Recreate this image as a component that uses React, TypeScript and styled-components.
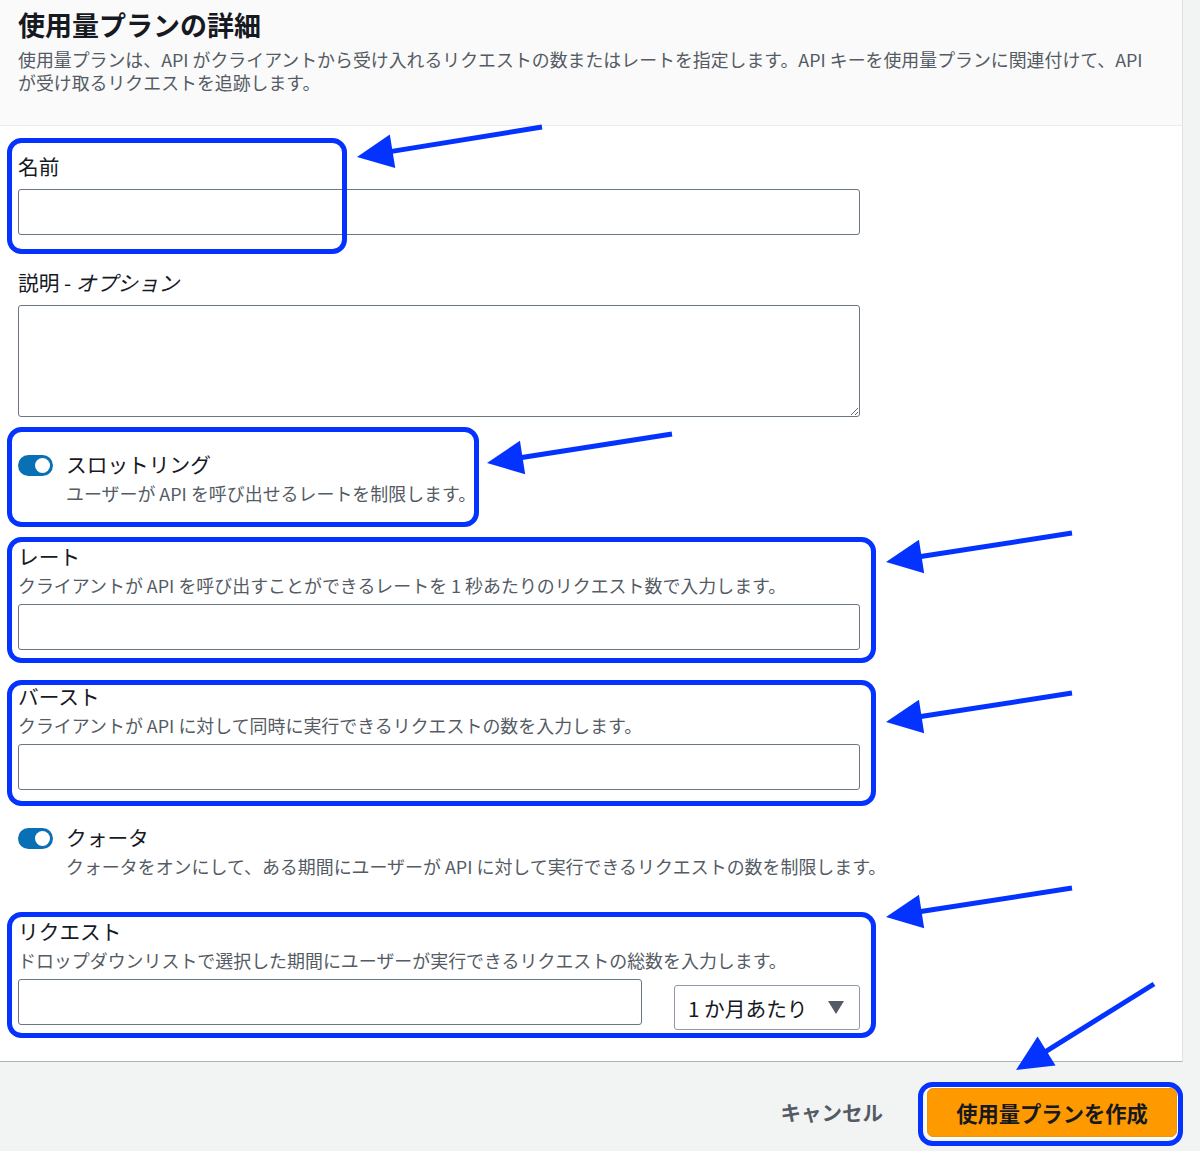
import React from "react";
import styled, { createGlobalStyle } from "styled-components";

const GlobalStyle = createGlobalStyle`
  html, body { margin: 0; padding: 0; background: #f2f3f3; }
  body {
    font-family: "Noto Sans CJK JP", "Noto Sans", sans-serif;
    color: #16191f;
  }
  * { box-sizing: border-box; }
`;

const Page = styled.div`
  position: relative;
  width: 1200px;
  height: 1151px;
  overflow: hidden;
  background: #f2f3f3;
  padding-right: 17px;
`;

const Panel = styled.section`
  background: #ffffff;
  border-right: 1px solid #dfe3e3;
  border-bottom: 1px solid #aab7b8;
`;

const Header = styled.header`
  background: #fafafa;
  border-bottom: 1px solid #eaeded;
  padding: 9px 18px 31px;
`;

const Title = styled.h2`
  margin: 0;
  font-size: 27px;
  line-height: 32px;
  font-weight: 700;
  color: #16191f;
`;

const Lead = styled.p`
  margin: 7px 0 0;
  font-size: 17.9px;
  line-height: 23px;
  color: #545b64;
  white-space: nowrap;
`;

const Body = styled.div`
  padding: 26px 18px 31px;
  display: flex;
  flex-direction: column;
`;

const Field = styled.div<{ $gap?: number }>`
  margin-top: ${(p) => p.$gap ?? 0}px;
  display: flex;
  flex-direction: column;
`;

const Label = styled.label`
  font-size: 20.7px;
  line-height: 28px;
  color: #16191f;
  em {
    font-style: italic;
  }
`;

const Hint = styled.div`
  margin-top: 2px;
  font-size: 17.95px;
  line-height: 26px;
  color: #545b64;
  white-space: nowrap;
`;

const TextInput = styled.input<{ $gap?: number; $width?: number }>`
  display: block;
  width: ${(p) => p.$width ?? 842}px;
  height: 46px;
  margin-top: ${(p) => p.$gap ?? 6}px;
  border: 1px solid #6b7683;
  border-radius: 3px;
  background: #fff;
  font: inherit;
  font-size: 18px;
  padding: 0 12px;
`;

const TextArea = styled.textarea`
  display: block;
  width: 842px;
  height: 112px;
  margin-top: 9px;
  border: 1px solid #6b7683;
  border-radius: 3px;
  background: #fff;
  font: inherit;
  resize: vertical;
`;

const ToggleRow = styled.div<{ $gap?: number }>`
  margin-top: ${(p) => p.$gap ?? 0}px;
  display: flex;
  align-items: flex-start;
  gap: 13px;
`;

const Switch = styled.span`
  position: relative;
  flex: none;
  width: 35px;
  height: 21px;
  margin-top: 5px;
  border-radius: 11px;
  background: #0a70b6;
`;

const Knob = styled.span`
  position: absolute;
  top: 3px;
  right: 3px;
  width: 15px;
  height: 15px;
  border-radius: 50%;
  background: #ffffff;
`;

const ToggleText = styled.div`
  display: flex;
  flex-direction: column;
`;

const InlineRow = styled.div`
  display: flex;
  align-items: flex-start;
  gap: 32px;
`;

const SelectBox = styled.div`
  width: 186px;
  height: 45px;
  margin-top: 12px;
  border: 1px solid #8d99a8;
  border-radius: 3px;
  background: #fff;
  display: flex;
  align-items: center;
  justify-content: space-between;
  padding: 0 15px 0 13px;
  font-size: 20.7px;
  color: #16191f;
`;

const Caret = styled.svg`
  width: 16px;
  height: 13px;
  fill: #545b64;
`;

const Footer = styled.footer`
  display: flex;
  justify-content: flex-end;
  align-items: flex-start;
  padding: 26px 6px 0 0;
  gap: 24px;
`;

const CancelButton = styled.button`
  height: 48px;
  padding: 0 20px;
  border: none;
  background: transparent;
  font-family: inherit;
  font-size: 20.5px;
  font-weight: 700;
  color: #545b64;
`;

const PrimaryButton = styled.button`
  width: 250px;
  height: 49px;
  border: 1px solid #f39400;
  border-radius: 6px;
  background: #ff9900;
  box-shadow: 0 0 0 2px #ffffff;
  font-family: inherit;
  font-size: 21.3px;
  font-weight: 700;
  color: #16191f;
`;

const Overlay = styled.svg`
  position: absolute;
  left: 0;
  top: 0;
  width: 1200px;
  height: 1151px;
  pointer-events: none;
`;

const BLUE = "#0433ff";
const SW = 5;

type Box = [number, number, number, number];
const boxes: Box[] = [
  [7, 138, 347, 254],
  [7, 427, 479, 527],
  [7, 537, 876, 663],
  [7, 680, 876, 806],
  [7, 912, 876, 1038],
  [918, 1082, 1183, 1146],
];

type ArrowDef = [number, number, number, number];
const arrows: ArrowDef[] = [
  [542, 127, 357, 157],
  [672, 434, 487, 463],
  [1072, 533, 886, 562],
  [1072, 693, 886, 722],
  [1072, 888, 886, 917],
  [1154, 984, 1016, 1070],
];

function Arrow({ def }: { def: ArrowDef }) {
  const [x1, y1, x2, y2] = def;
  const dx = x1 - x2;
  const dy = y1 - y2;
  const len = Math.hypot(dx, dy);
  const ux = dx / len;
  const uy = dy / len;
  const nx = -uy;
  const ny = ux;
  const headLen = 36;
  const half = 17;
  const bx = x2 + ux * headLen;
  const by = y2 + uy * headLen;
  const pts = `${x2},${y2} ${bx + nx * half},${by + ny * half} ${bx - nx * half},${by - ny * half}`;
  return (
    <g>
      <line
        x1={x1}
        y1={y1}
        x2={x2 + ux * (headLen - 4)}
        y2={y2 + uy * (headLen - 4)}
        stroke={BLUE}
        strokeWidth={SW}
      />
      <polygon points={pts} fill={BLUE} />
    </g>
  );
}

function Annotations() {
  return (
    <Overlay viewBox="0 0 1200 1151">
      {boxes.map(([l, t, r, b], i) => (
        <rect
          key={i}
          x={l + SW / 2}
          y={t + SW / 2}
          width={r - l - SW}
          height={b - t - SW}
          rx={12}
          ry={12}
          fill="none"
          stroke={BLUE}
          strokeWidth={SW}
        />
      ))}
      {arrows.map((a, i) => (
        <Arrow key={i} def={a} />
      ))}
    </Overlay>
  );
}

export default function App() {
  return (
    <>
      <GlobalStyle />
      <Page>
        <Panel>
          <Header>
            <Title>使用量プランの詳細</Title>
            <Lead>
              使用量プランは、API がクライアントから受け入れるリクエストの数またはレートを指定します。API キーを使用量プランに関連付けて、API
              <br />
              が受け取るリクエストを追跡します。
            </Lead>
          </Header>
          <Body>
            <Field>
              <Label>名前</Label>
              <TextInput $gap={9} />
            </Field>
            <Field $gap={33}>
              <Label>
                説明 - <em>オプション</em>
              </Label>
              <TextArea />
            </Field>
            <ToggleRow $gap={33}>
              <Switch>
                <Knob />
              </Switch>
              <ToggleText>
                <Label>スロットリング</Label>
                <Hint>ユーザーが API を呼び出せるレートを制限します。</Hint>
              </ToggleText>
            </ToggleRow>
            <Field $gap={36}>
              <Label>レート</Label>
              <Hint>クライアントが API を呼び出すことができるレートを 1 秒あたりのリクエスト数で入力します。</Hint>
              <TextInput />
            </Field>
            <Field $gap={32}>
              <Label>バースト</Label>
              <Hint>クライアントが API に対して同時に実行できるリクエストの数を入力します。</Hint>
              <TextInput />
            </Field>
            <ToggleRow $gap={33}>
              <Switch>
                <Knob />
              </Switch>
              <ToggleText>
                <Label>クォータ</Label>
                <Hint>クォータをオンにして、ある期間にユーザーが API に対して実行できるリクエストの数を制限します。</Hint>
              </ToggleText>
            </ToggleRow>
            <Field $gap={38}>
              <Label>リクエスト</Label>
              <Hint>ドロップダウンリストで選択した期間にユーザーが実行できるリクエストの総数を入力します。</Hint>
              <InlineRow>
                <TextInput $width={624} />
                <SelectBox>
                  <span>1 か月あたり</span>
                  <Caret viewBox="0 0 16 13">
                    <polygon points="0,0 16,0 8,13" />
                  </Caret>
                </SelectBox>
              </InlineRow>
            </Field>
          </Body>
        </Panel>
        <Footer>
          <CancelButton>キャンセル</CancelButton>
          <PrimaryButton>使用量プランを作成</PrimaryButton>
        </Footer>
        <Annotations />
      </Page>
    </>
  );
}
